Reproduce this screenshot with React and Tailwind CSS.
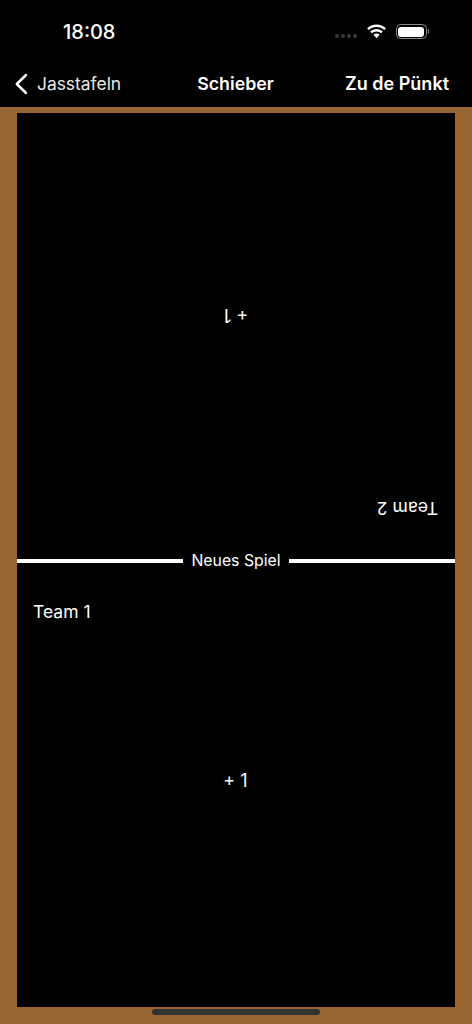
export default function App() {
  return (
    <div className="relative flex h-[1024px] w-[472px] flex-col overflow-hidden bg-black text-white" style={{ fontFamily: 'Inter, "Liberation Sans", sans-serif' }}>
      <div className="flex h-[64px] shrink-0 items-start justify-between pl-[63px] pr-[43px] pt-[20px]">
        <span className="text-[20px] font-medium leading-[24px]">18:08</span>
        <div className="flex items-center pt-[4px]">
          <div className="mr-[9px] mt-[9px] flex gap-[2px]">
            <span className="h-[4px] w-[4px] rounded-full bg-[#3a3a3a]" />
            <span className="h-[4px] w-[4px] rounded-full bg-[#3a3a3a]" />
            <span className="h-[4px] w-[4px] rounded-full bg-[#3a3a3a]" />
            <span className="h-[4px] w-[4px] rounded-full bg-[#3a3a3a]" />
          </div>
          <svg width="21" height="15" viewBox="0 0 21 15" fill="white" className="mr-[9px]">
            <path d="M10.5 3c3 0 5.7 1.1 7.8 3l1.6-1.7C17.4 1.9 14.1.5 10.5.5S3.6 1.9 1.1 4.3L2.7 6c2.1-1.9 4.8-3 7.8-3z" />
            <path d="M10.5 7.4c1.8 0 3.4.7 4.7 1.8l1.6-1.7c-1.7-1.5-3.9-2.4-6.3-2.4s-4.6.9-6.3 2.4l1.6 1.7c1.3-1.1 2.9-1.8 4.7-1.8z" />
            <path d="M10.5 9.6c-1.2 0-2.3.4-3.1 1.2l3.1 3.4 3.1-3.4c-.8-.8-1.9-1.2-3.1-1.2z" />
          </svg>
          <div className="flex items-center">
            <div className="h-[15px] w-[31px] rounded-[4.5px] border border-[#8a8a8a] p-[1.5px]">
              <div className="h-full w-full rounded-[3px] bg-white" />
            </div>
            <div className="ml-[1px] h-[5px] w-[1.5px] rounded-r-full bg-[#8a8a8a]" />
          </div>
        </div>
      </div>
      <div className="flex h-[43px] shrink-0 items-center justify-between pb-[3px] pl-[15px] pr-[23px]">
        <div className="flex w-[130px] items-center">
          <svg width="13" height="22" viewBox="0 0 13 22" fill="none" stroke="white" strokeWidth="2.5" strokeLinecap="round" strokeLinejoin="round">
            <path d="M11 2 1.8 11 11 20" />
          </svg>
          <span className="ml-[9px] text-[17.4px] font-normal leading-[24px] text-[#e8e8e8]">Jasstafeln</span>
        </div>
        <span className="pl-[7px] text-[17.8px] font-semibold leading-[24px]">Schieber</span>
        <span className="w-[130px] whitespace-nowrap text-right text-[18px] font-semibold leading-[24px]">Zu de Pünkt</span>
      </div>
      <div className="flex min-h-0 flex-1 flex-col bg-[#996633] px-[17px] pb-[17px] pt-[6px]">
        <div className="flex min-h-0 flex-1 flex-col bg-black">
          <div className="flex h-[445px] rotate-180 flex-col px-[17px] pt-[38px]">
            <span className="text-[17.5px] leading-[24px]">Team 2</span>
            <span className="mt-[169px] text-center text-[18px] leading-[24px]">+ 1</span>
          </div>
          <div className="flex h-[6px] items-center">
            <div className="mb-[1px] h-[4px] flex-1 bg-white" />
            <span className="px-[8.5px] text-[15.8px] leading-[20px]">Neues Spiel</span>
            <div className="mb-[1px] h-[4px] flex-1 bg-white" />
          </div>
          <div className="flex flex-1 flex-col pl-[16px] pr-[17px] pt-[36px]">
            <span className="text-[17.5px] leading-[24px]">Team 1</span>
            <span className="mt-[145px] text-center text-[18px] leading-[24px]">+ 1</span>
          </div>
        </div>
      </div>
      <div className="absolute bottom-[9px] left-[152px] h-[6px] w-[168px] rounded-full bg-[#333333]" />
    </div>
  );
}
